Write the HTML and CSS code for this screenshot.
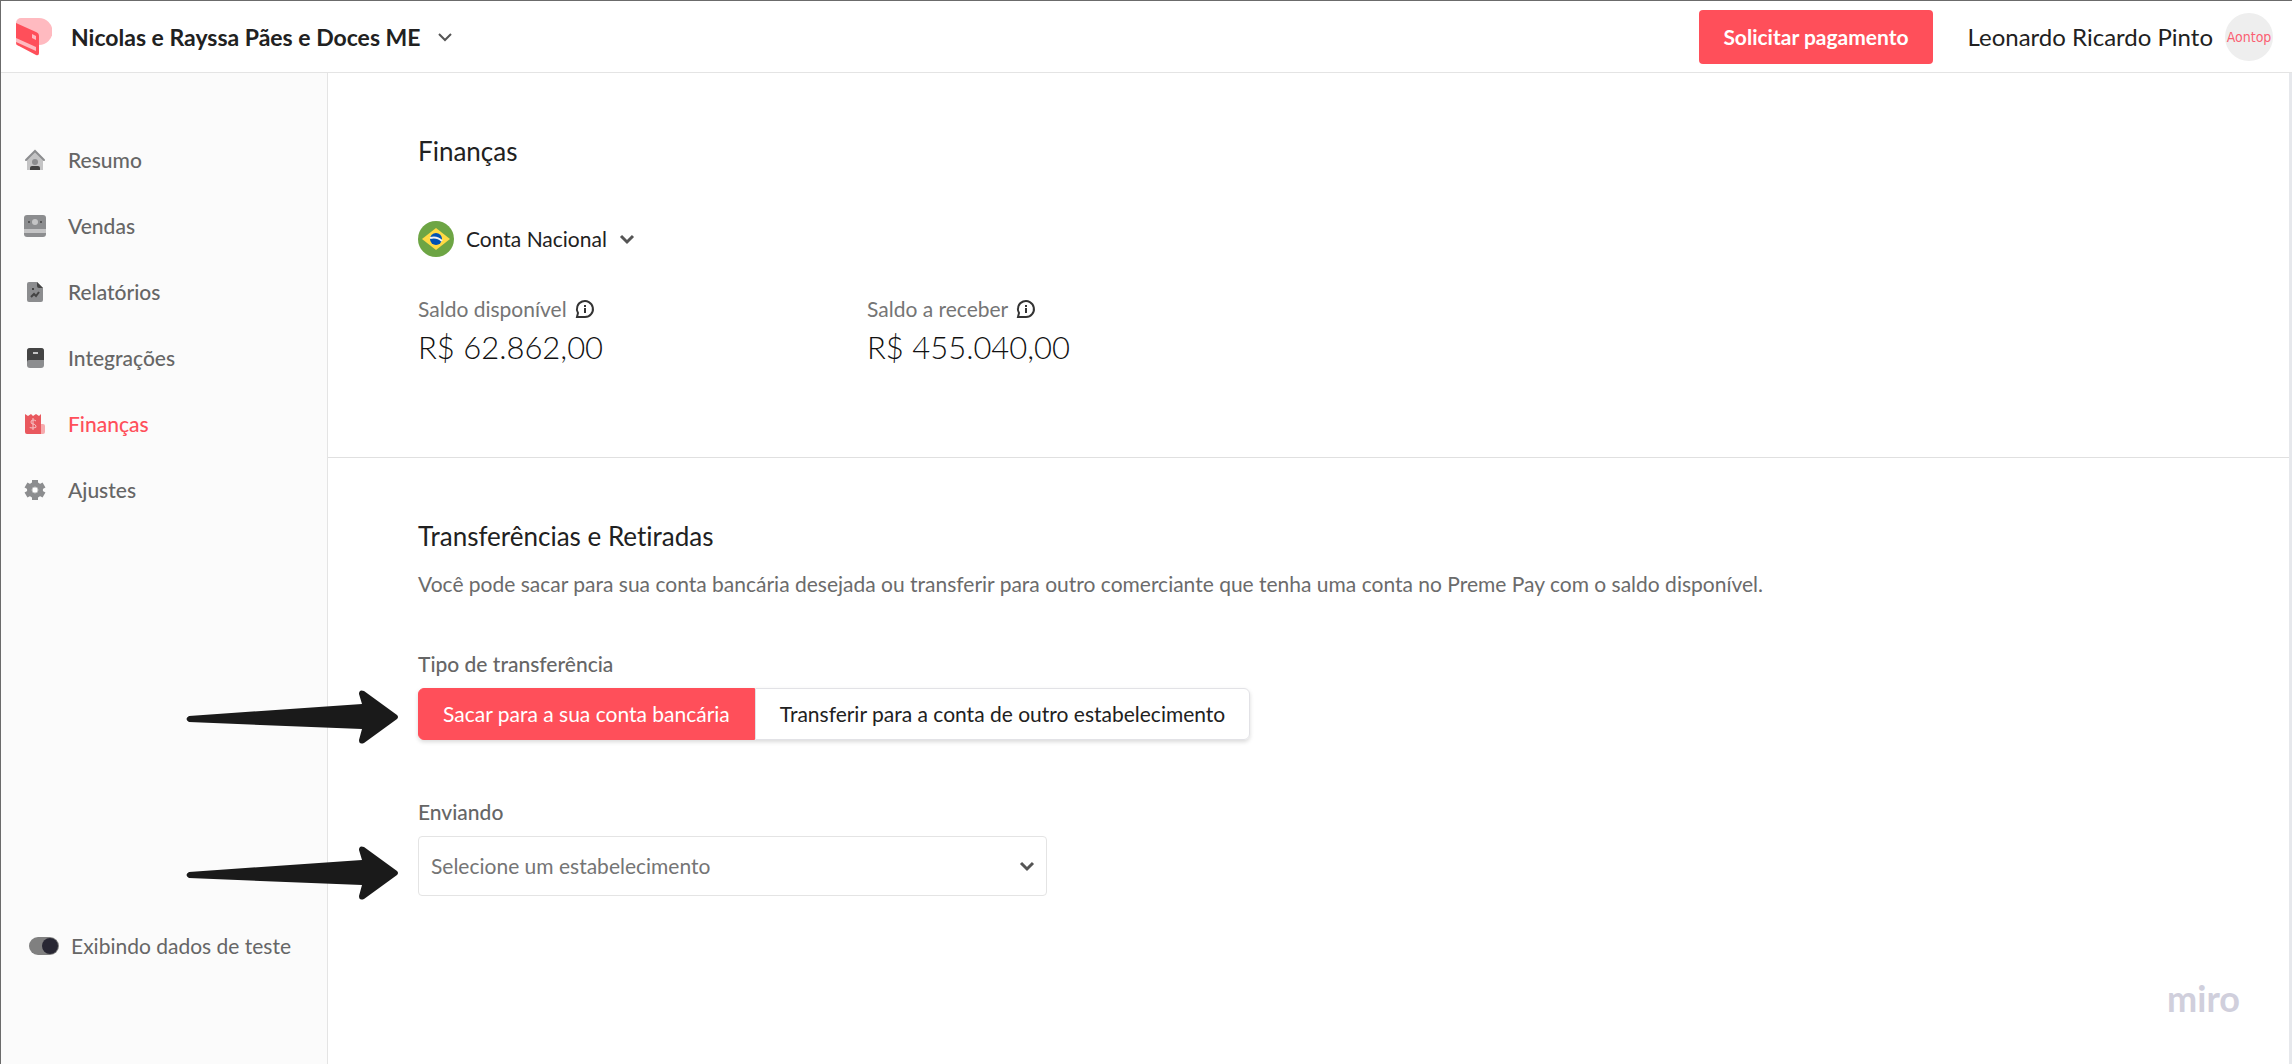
FILE: index.html
```html
<!DOCTYPE html>
<html lang="pt-BR">
<head>
  <meta charset="UTF-8" />
  <meta name="viewport" content="width=device-width, initial-scale=1.0"/>
  <title>Finanças - Preme Pay</title>
  <link rel="stylesheet" href="styles.css">
</head>
<body>

  <header class="topbar">
    <svg class="logo" viewBox="0 0 36 38" aria-hidden="true">
      <path d="M5 0h18a13.500 13.500 0 0 1 0 27H0V5a5 5 0 0 1 5-5z" fill="#ffbac0"/>
      <path d="M0 5l20 9q3 1 3 4v17q0 3-3 2L3 28q-3-1-3-4z" fill="#ff4f5a"/>
      <path d="M0 20l20 9v4L0 24z" fill="#ffbac0"/>
      <path d="M16 16l4 2v4l-4-2z" fill="#ffbac0"/>
    </svg>
    <button class="company" type="button">
      Nicolas e Rayssa Pães e Doces ME
      <svg class="chevron" viewBox="0 0 16 16" aria-hidden="true"><path d="M2 5l6 6 6-6"/></svg>
    </button>
    <button class="pay-btn" type="button">Solicitar pagamento</button>
    <span class="user-name">Leonardo Ricardo Pinto</span>
    <span class="avatar">Aontop</span>
  </header>

  <div class="layout">
    <aside class="sidebar">
      <nav class="menu">
        <a class="menu-link" href="#">
          <svg class="menu-icon" viewBox="0 0 24 24" aria-hidden="true">
            <path d="M4 10l8-7 8 7v12H4z" fill="#c4c4c5"/>
            <path d="M3 12l9-9 9 9" fill="none" stroke="#8c8d8f" stroke-width="2" stroke-linecap="round"/>
            <circle cx="12" cy="14" r="3" fill="#8c8d8f"/>
            <path d="M7 22v-2q0-2 2-2h6q2 0 2 2v2z" fill="#444"/>
          </svg>
          Resumo
        </a>
        <a class="menu-link" href="#">
          <svg class="menu-icon" viewBox="0 0 24 24" aria-hidden="true">
            <rect x="1" y="1" width="22" height="22" rx="3" fill="#8c8d8f"/>
            <path d="M1 15h22v4H1z" fill="#c4c4c5"/>
            <circle cx="12" cy="8" r="3" fill="#c4c4c5"/>
            <circle cx="6" cy="8" r="1" fill="#444"/><circle cx="18" cy="8" r="1" fill="#444"/>
          </svg>
          Vendas
        </a>
        <a class="menu-link" href="#">
          <svg class="menu-icon" viewBox="0 0 24 24" aria-hidden="true">
            <path d="M6 2h8l6 6v12q0 2-2 2H6q-2 0-2-2V4q0-2 2-2z" fill="#8c8d8f"/>
            <path d="M14 2l6 6h-4q-2 0-2-2z" fill="#444"/>
            <path d="M8 17l3-3 2 2 3-4M9 9h2" fill="none" stroke="#444" stroke-width="2"/>
          </svg>
          Relatórios
        </a>
        <a class="menu-link" href="#">
          <svg class="menu-icon" viewBox="0 0 24 24" aria-hidden="true">
            <rect x="4" y="2" width="17" height="20" rx="3" fill="#8c8d8f"/>
            <path d="M7 2h11q3 0 3 3v9H6q-2 0-2 2V5q0-3 3-3z" fill="#444"/>
            <path d="M10 7h5" stroke="#c4c4c5" stroke-width="2"/>
          </svg>
          Integrações
        </a>
        <a class="menu-link active" href="#">
          <svg class="menu-icon" viewBox="0 0 24 24" aria-hidden="true">
            <path d="M17 12h3q2 0 2 2v6q0 2-2 2h-3z" fill="#f6abae"/>
            <path d="M2 2l3 2 3-2 2 2 3-2 3 2 2-2v20H4q-2 0-2-2z" fill="#e9585e"/>
            <path d="M13 9q-1-1-3-1t-2 2 2 2 3 2-3 2-3-1M10 6v12" fill="none" stroke="#f6c3c5" stroke-width="1"/>
          </svg>
          Finanças
        </a>
        <a class="menu-link" href="#">
          <svg class="menu-icon" viewBox="0 0 24 24" aria-hidden="true">
            <circle cx="12" cy="12" r="8" fill="#8c8d8f"/>
            <path d="M12 2v20M3 7l18 10M3 17L21 7" stroke="#8c8d8f" stroke-width="6"/>
            <circle cx="12" cy="12" r="3" fill="#fff" stroke="#c4c4c5" stroke-width="1"/>
          </svg>
          Ajustes
        </a>
      </nav>
      <label class="test-data">
        <input class="switch" type="checkbox" role="switch" checked>
        Exibindo dados de teste
      </label>
    </aside>

    <main class="content">
      <section class="section finances">
        <h1 class="title">Finanças</h1>
        <button class="account" type="button">
          <svg class="flag" viewBox="0 0 36 36" aria-hidden="true">
            <circle cx="18" cy="18" r="18" fill="#6da544"/>
            <path d="M18 7l14 11-14 11L4 18z" fill="#ffda44"/>
            <circle cx="18" cy="18" r="6" fill="#0052b4"/>
            <path d="M12 17q7-2 12 3" fill="none" stroke="#f0f0f0" stroke-width="2"/>
          </svg>
          Conta Nacional
          <svg class="chevron bold" viewBox="0 0 16 16" aria-hidden="true"><path d="M2 5l6 6 6-6"/></svg>
        </button>
        <dl class="balances">
          <div class="balance">
            <dt class="balance-label">
              Saldo disponível
              <svg class="info" viewBox="0 0 20 20" aria-hidden="true">
                <path d="M2 18l1-4a8 8 0 1 1 7 4z"/><path d="M10 9v5M10 6v2"/>
              </svg>
            </dt>
            <dd class="balance-value">R$ 62.862,00</dd>
          </div>
          <div class="balance">
            <dt class="balance-label">
              Saldo a receber
              <svg class="info" viewBox="0 0 20 20" aria-hidden="true">
                <path d="M2 18l1-4a8 8 0 1 1 7 4z"/><path d="M10 9v5M10 6v2"/>
              </svg>
            </dt>
            <dd class="balance-value">R$ 455.040,00</dd>
          </div>
        </dl>
      </section>

      <section class="section transfers">
        <h2 class="title">Transferências e Retiradas</h2>
        <p class="description">Você pode sacar para sua conta bancária desejada ou transferir para outro comerciante que tenha uma conta no Preme Pay com o saldo disponível.</p>

        <div class="field">
          <span class="field-label" id="typeLabel">Tipo de transferência</span>
          <div class="toggle" role="group" aria-labelledby="typeLabel">
            <button class="toggle-btn selected" type="button">Sacar para a sua conta bancária</button>
            <button class="toggle-btn" type="button">Transferir para a conta de outro estabelecimento</button>
          </div>
          <svg class="arrow" viewBox="0 0 212 54" aria-hidden="true"><path d="M3 26L176 14l-3-10q0-5 5-3l33 24q2 2 0 4l-33 24q-5 2-5-3l3-11L3 32q-5-3 0-6z"/></svg>
        </div>

        <div class="field">
          <label class="field-label" for="store">Enviando</label>
          <div class="select-wrap">
            <select class="select" id="store">
              <option>Selecione um estabelecimento</option>
            </select>
            <svg class="chevron bold select-chevron" viewBox="0 0 16 16" aria-hidden="true"><path d="M2 5l6 6 6-6"/></svg>
          </div>
          <svg class="arrow" viewBox="0 0 212 54" aria-hidden="true"><path d="M3 26L176 14l-3-10q0-5 5-3l33 24q2 2 0 4l-33 24q-5 2-5-3l3-11L3 32q-5-3 0-6z"/></svg>
        </div>
      </section>
    </main>
  </div>

  <span class="watermark">miro</span>

</body>
</html>
```
FILE: styles.css
```css
* {
  box-sizing: border-box;
}
body {
  font-family: Lato, sans-serif;
  font-size: 21px;
  line-height: 28px;
  font-variant-ligatures: none;
  margin: 0;
  min-height: 100vh;
  display: flex;
  flex-direction: column;
  background: #fff;
  color: #212121;
  border-top: 1px solid #6b6b6b;
  border-left: 1px solid #6b6b6b;
}
button, select {
  font: inherit;
  font-variant-ligatures: none;
  color: inherit;
}
.topbar {
  display: flex;
  align-items: center;
  height: 72px;
  padding: 0 19px 0 15px;
  border-bottom: 1px solid #e4e4e4;
}
.logo {
  width: 36px;
  height: 38px;
}
.company {
  display: flex;
  align-items: center;
  gap: 16px;
  margin-left: 19px;
  margin-right: auto;
  padding: 0;
  border: none;
  background: none;
  font-size: 23px;
  font-weight: 700;
}
.chevron {
  width: 16px;
  height: 16px;
  fill: none;
  stroke: #555;
  stroke-width: 2;
}
.chevron.bold {
  stroke-width: 3;
}
.pay-btn {
  height: 54px;
  padding: 0 24px;
  border: none;
  border-radius: 4px;
  background: #ff4f5a;
  color: #fff;
  font-weight: 700;
}
.user-name {
  margin-left: 35px;
  font-size: 24px;
}
.avatar {
  display: flex;
  align-items: center;
  justify-content: center;
  width: 48px;
  height: 48px;
  margin-left: 12px;
  border-radius: 50%;
  background: #eee;
  color: #fb5f72;
  font-family: "Liberation Sans Narrow", "DejaVu Sans Condensed", sans-serif;
  font-size: 14px;
}
.layout {
  display: flex;
  flex: 1;
}
.sidebar {
  display: flex;
  flex-direction: column;
  justify-content: space-between;
  width: 327px;
  padding: 54px 22px 104px;
  background: #fbfbfb;
  border-right: 1px solid #e4e4e4;
  color: #666;
}
.menu {
  display: flex;
  flex-direction: column;
}
.menu-link {
  display: flex;
  align-items: center;
  gap: 21px;
  height: 66px;
  color: inherit;
  font-weight: 500;
  text-decoration: none;
}
.menu-link.active {
  color: #ff4f5a;
}
.menu-icon {
  width: 24px;
  height: 24px;
}
.test-data {
  display: flex;
  align-items: center;
  gap: 12px;
  padding-left: 6px;
}
.switch {
  appearance: none;
  width: 30px;
  height: 18px;
  margin: 0;
  padding: 1px;
  border-radius: 9px;
  background: #808080;
}
.switch::before {
  content: "";
  display: block;
  width: 16px;
  height: 16px;
  margin-left: auto;
  border-radius: 50%;
  background: #282733;
}
.content {
  flex: 1;
  border-right: 3px solid #e6e8ec;
}
.section {
  padding-left: 90px;
}
.finances {
  height: 385px;
  padding-top: 64px;
  border-bottom: 1px solid #e0e0e0;
}
.title {
  margin: 0;
  font-size: 26px;
  font-weight: 400;
}
.account {
  display: flex;
  align-items: center;
  gap: 12px;
  margin-top: 56px;
  padding: 0;
  border: none;
  background: none;
}
.flag {
  width: 36px;
  height: 36px;
}
.balances {
  display: flex;
  margin: 38px 0 0;
}
.balance {
  width: 449px;
}
.balance-label {
  display: flex;
  align-items: center;
  gap: 8px;
  color: #757575;
}
.info {
  width: 20px;
  height: 20px;
  fill: none;
  stroke: #333;
  stroke-width: 2;
}
.balance-value {
  margin: 4px 0 0;
  color: #111;
  font-size: 31px;
  line-height: 40px;
  font-weight: 300;
}
.transfers {
  padding-top: 64px;
}
.description {
  margin: 20px 0 0;
  color: #6b6b6b;
}
.field {
  position: relative;
  margin-top: 52px;
}
.field + .field {
  margin-top: 58px;
}
.field-label {
  display: block;
  margin-bottom: 10px;
  color: #666;
  font-weight: 500;
}
.toggle {
  display: flex;
  width: fit-content;
  border-radius: 6px;
  box-shadow: 0 2px 4px rgba(0,0,0,0.15);
}
.toggle-btn {
  height: 52px;
  padding: 0 24px;
  border: 1px solid #e2e2e6;
  border-radius: 0 6px 6px 0;
  background: #fff;
}
.toggle-btn.selected {
  border-color: #ff4f5a;
  border-radius: 6px 0 0 6px;
  background: #ff4f5a;
  color: #fff;
}
.select-wrap {
  position: relative;
  width: 629px;
}
.select {
  appearance: none;
  width: 100%;
  height: 60px;
  padding: 0 12px;
  border: 1px solid #e4e4e4;
  border-radius: 4px;
  background: #fff;
  color: #757575;
}
.select-chevron {
  position: absolute;
  right: 12px;
  top: 22px;
  pointer-events: none;
}
/* pointers drawn over the sidebar edge */
.arrow {
  position: absolute;
  right: calc(100% + 20px);
  bottom: -4px;
  width: 212px;
  height: 54px;
  fill: #1a1a1a;
}
.watermark {
  position: absolute;
  right: 52px;
  bottom: 52px;
  color: #d0cfdc;
  font-size: 36px;
  font-weight: 700;
}
```
